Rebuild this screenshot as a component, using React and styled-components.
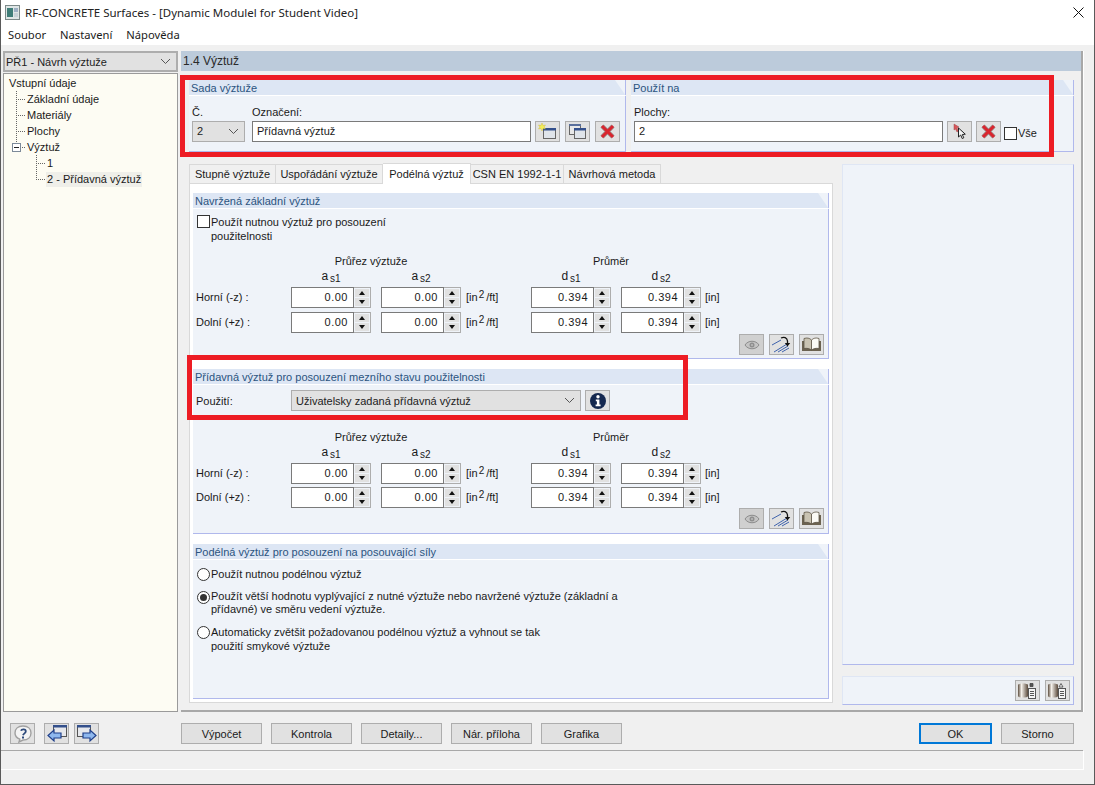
import React from "react"
import styled, { createGlobalStyle } from "styled-components"

const Global = createGlobalStyle`
  html, body { margin: 0; padding: 0; background: #fff; }
  body { font-family: "Liberation Sans", "Noto Sans", sans-serif; font-size: 11px; color: #1a1a1a; }
  * { box-sizing: border-box; }
`

const Window = styled.div`
  position: relative;
  width: 1095px;
  height: 785px;
  display: flex;
  flex-direction: column;
  background: #f0f0f0;
  border: 1px solid #5a5a5a;
  border-top: 0;
  overflow: hidden;
`

const TitleBar = styled.div`
  height: 22px;
  flex: none;
  padding: 2px 0 0 4px;
  background: #fff;
  display: flex;
  align-items: center;
  gap: 5px;
  font-family: "Noto Sans", sans-serif;
  font-size: 11.5px;
  color: #222;
`

const CloseX = styled.svg`
  margin-left: auto;
  margin-right: 10px;
  width: 11px;
  height: 11px;
`

const MenuBar = styled.div`
  height: 23px;
  flex: none;
  background: #fff;
  padding: 2px 0 0 7px;
  display: flex;
  align-items: center;
  gap: 14px;
  font-family: "Noto Sans", sans-serif;
  font-size: 11.2px;
`

const Body = styled.div`
  height: 667px;
  flex: none;
  display: flex;
  padding: 6px 0 0 2px;
  gap: 3px;
`

const Sidebar = styled.div`
  width: 175px;
  display: flex;
  flex-direction: column;
  gap: 1px;
`

const Combo = styled.div`
  width: ${p => p.$w}px;
  height: 21px;
  flex: none;
  display: flex;
  align-items: center;
  justify-content: space-between;
  padding: 0 5px 0 ${p => p.$thick ? 1 : 4}px;
  background: #e1e1e1;
  border: ${p => p.$thick ? 2 : 1}px solid #adadad;
  color: #222;
`

const Tree = styled.div`
  flex: 1;
  background: #fdfcf3;
  border: 1px solid #9a9a9a;
  padding: 1px 0 0 4px;
`

const TreeRow = styled.div`
  height: 16px;
  display: flex;
  align-items: center;
  margin-left: ${p => p.$level === 2 ? 28 : p.$level === 1 ? 8 : 0}px;
`

const Branch = styled.span`
  position: relative;
  width: 10px;
  height: 16px;
  flex: none;
  background-image:
    repeating-linear-gradient(to bottom, #666 0 1px, transparent 1px 2px),
    repeating-linear-gradient(to right, #666 0 1px, transparent 1px 2px);
  background-size: 1px ${p => p.$last ? "8px" : "16px"}, 9px 1px;
  background-position: 0 0, 0 8px;
  background-repeat: no-repeat;
`

const Expander = styled.span`
  position: absolute;
  left: -4px;
  top: 4px;
  width: 9px;
  height: 9px;
  background: #fff;
  border: 1px solid #7d8a99;
  &::after {
    content: "";
    position: absolute;
    left: 1px;
    top: 3px;
    width: 5px;
    height: 1px;
    background: #222;
  }
`

const TreeLabel = styled.span`
  padding: 0 1px;
  line-height: 15px;
  background: ${p => p.$selected ? "#efefe9" : "transparent"};
`

const Main = styled.div`
  width: 902px;
  border-right: 2px solid #a8a8a8;
  border-bottom: 2px solid #a8a8a8;
  box-shadow: 1px 0 0 #fff;
  display: flex;
  flex-direction: column;
`

const MainHeader = styled.div`
  height: 20px;
  flex: none;
  background: #bccbdb;
  padding-left: 2px;
  display: flex;
  align-items: center;
  font-size: 12px;
  color: #2a2a2a;
`

const TopRow = styled.div`
  display: flex;
  gap: 5px;
  padding: 9px 0 0 8px;
`

const Group = styled.section`
  width: ${p => p.$w ? p.$w + "px" : "auto"};
  height: ${p => p.$h}px;
  flex: none;
  display: flex;
  flex-direction: column;
  border-right: 1px solid #b0b8ec;
  border-bottom: 1px solid #b0b8ec;
  background: #eff3f9;
`

const GroupHead = styled.header`
  height: 16px;
  flex: none;
  margin-right: -1px;
  background: #dde6f4;
  padding-left: 2px;
  display: flex;
  align-items: center;
  color: #2b5480;
  border-bottom: 1px solid #fff;
  clip-path: polygon(0 0, calc(100% - 11px) 0, 100% 100%, 0 100%);
`

const GroupBody = styled.div`
  flex: 1;
  display: flex;
  flex-direction: column;
  padding: ${p => p.$top ?? 6}px 4px 0 3px;
`

const FieldRow = styled.div`
  display: flex;
  align-items: flex-end;
  gap: ${p => p.$gap || 6}px;
`

const Field = styled.label`
  display: flex;
  flex-direction: column;
  gap: 2px;
  line-height: 13px;
  margin-right: ${p => p.$after || 0}px;
`

const TextBox = styled.div`
  width: ${p => p.$w}px;
  height: 21px;
  display: flex;
  align-items: center;
  padding-left: 4px;
  background: #fff;
  border: 1px solid #7a7a7a;
`

const IconButton = styled.button`
  width: 25px;
  height: 21px;
  flex: none;
  padding: 0;
  display: flex;
  align-items: center;
  justify-content: center;
  background: ${p => p.$dim ? "#d0d0d0" : "#e1e1e1"};
  border: 1px solid #adadad;
`

const CheckBox = styled.span`
  width: 13px;
  height: 13px;
  flex: none;
  margin-left: ${p => p.$inset || 0}px;
  background: #fff;
  border: 1px solid #333;
`

const CheckLabel = styled.div`
  display: flex;
  align-items: ${p => p.$top ? "flex-start" : "center"};
  gap: 1px;
  line-height: 14px;
  margin-bottom: ${p => p.$lift || 0}px;
`

const Tabs = styled.div`
  display: flex;
  padding: 0 0 0 8px;
  margin-top: 12px;
  height: 20px;
`

const Tab = styled.div`
  width: ${p => p.$w}px;
  height: ${p => p.$active ? 21 : 19}px;
  margin-top: ${p => p.$active ? -1 : 0}px;
  display: flex;
  align-items: center;
  justify-content: center;
  white-space: nowrap;
  background: ${p => p.$active ? "#fff" : "#f0f0f0"};
  border: 1px solid #d9d9d9;
  border-bottom: 0;
  border-left-width: ${p => p.$first ? 1 : 0}px;
  position: ${p => p.$active ? "relative" : "static"};
  z-index: 1;
`

const Lower = styled.div`
  flex: 1;
  display: flex;
  padding-left: 8px;
`

const TabColumn = styled.div`
  width: 644px;
  flex: none;
  display: flex;
  flex-direction: column;
  margin-top: -1px;
`

const TabPanel = styled.div`
  height: 520px;
  background: #fff;
  border: 1px solid #d9d9d9;
  padding: 9px 3px 0 3px;
  display: flex;
  flex-direction: column;
  gap: 10px;
`

const RightColumn = styled.div`
  width: 232px;
  margin: -20px 0 0 9px;
  display: flex;
  flex-direction: column;
  gap: 11px;
`

const SidePanel = styled.div`
  height: ${p => p.$h}px;
  background: #eff3f9;
  border: 1px solid #dfe6f4;
  border-right: 1px solid #b0b8ec;
  border-bottom: 1px solid #b0b8ec;
  display: flex;
  align-items: center;
  justify-content: flex-end;
  gap: 5px;
  padding-right: 3px;
`

const ValueGrid = styled.div`
  --row-gap: ${p => p.$rowGap}px;
  display: grid;
  grid-template-columns: 95px 90px 80px 70px 90px 80px auto;
  align-items: start;
  margin-top: ${p => p.$top}px;
`

const GridHead = styled.div`
  grid-column: ${p => p.$col};
  text-align: center;
  height: 15px;
  line-height: 15px;
  padding-right: ${p => p.$off || 0}px;
`

const SymbolHead = styled(GridHead)`
  margin-bottom: 3px;
  font-size: 12px;
`

const Sub = styled.span`
  font-size: 10px;
  margin-left: 2px;
  position: relative;
  top: 2px;
`

const RowLabel = styled.div`
  grid-column: 1;
  height: 21px;
  line-height: 20px;
  margin-bottom: var(--row-gap);
`

const Spin = styled.div`
  width: 80px;
  height: 21px;
  margin-bottom: var(--row-gap);
  display: flex;
`

const SpinInput = styled.div`
  width: 63px;
  height: 21px;
  padding-right: 5px;
  background: #fff;
  border: 1px solid #7a7a7a;
  text-align: right;
  line-height: 18px;
  letter-spacing: 0.5px;
`

const SpinArrows = styled.div`
  width: 17px;
  height: 21px;
  padding: 1px;
  border: 1px solid #adadad;
  border-left: 0;
  display: flex;
  flex-direction: column;
  gap: 1px;
`

const SpinPart = styled.span`
  flex: 1;
  background: #e1e1e1;
  display: flex;
  align-items: center;
  justify-content: center;
  &::after {
    content: "";
    border-left: 3px solid transparent;
    border-right: 3px solid transparent;
    ${p => p.$up ? "border-bottom: 4px solid #111;" : "border-top: 4px solid #111;"}
  }
`

const Unit = styled.div`
  height: 21px;
  margin-bottom: var(--row-gap);
  padding-left: ${p => p.$left}px;
  line-height: 21px;
  white-space: nowrap;
`

const Sup = styled.span`
  font-size: 10px;
  position: relative;
  top: -3px;
  margin: 0 2px 0 1px;
`

const ToolRow = styled.div`
  display: flex;
  justify-content: flex-end;
  gap: 5px;
  margin-top: ${p => p.$top || 0}px;
`

const RadioList = styled.div`
  display: flex;
  flex-direction: column;
  gap: 9px;
`

const RadioRow = styled.div`
  display: flex;
  gap: 1px;
  line-height: ${p => p.$lh || 14}px;
`

const Radio = styled.span`
  width: 13px;
  height: 13px;
  flex: none;
  margin: 1px 0 0 1px;
  border-radius: 50%;
  background: #fff;
  border: 1px solid #333;
  display: flex;
  align-items: center;
  justify-content: center;
  &::after {
    content: "";
    display: ${p => p.$on ? "block" : "none"};
    width: 7px;
    height: 7px;
    border-radius: 50%;
    background: #333;
  }
`

const UseRow = styled.div`
  display: flex;
  align-items: center;
  gap: 4px;
`

const UseLabel = styled.div`
  width: 91px;
`

const Footer = styled.div`
  height: 39px;
  flex: none;
  display: flex;
  align-items: flex-start;
  padding: 11px 0 0 9px;
  border-bottom: 1px solid #a8a8a8;
  width: 1082px;
`

const FooterGroup = styled.div`
  display: flex;
  gap: ${p => p.$gap}px;
  margin-left: ${p => p.$left || 0}px;
`

const CmdButton = styled.button`
  width: ${p => p.$w || 81}px;
  height: 21px;
  padding: 0;
  font: inherit;
  color: #1a1a1a;
  background: #e1e1e1;
  border: ${p => p.$primary ? "2px solid #0078d7" : "1px solid #adadad"};
`

const StatusBar = styled.div`
  height: 19px;
  width: 1082px;
  flex: none;
  border-bottom: 1px solid #fff;
  box-shadow: 1px 0 0 #fff;
`

const RedBox = styled.div`
  position: absolute;
  left: ${p => p.$x}px;
  top: ${p => p.$y}px;
  width: ${p => p.$w}px;
  height: ${p => p.$h}px;
  border: 5px solid #ed1c24;
  pointer-events: none;
`

const Chevron = () => (
  <svg width="11" height="7" viewBox="0 0 11 7">
    <path d="M1 1l4.500 4.500L10 1" fill="none" stroke="#555" strokeWidth="1" />
  </svg>
)

const RedCross = () => (
  <svg width="17" height="17" viewBox="0 0 17 17">
    <path d="M3 3l11 11M14 3L3 14" stroke="#9c8a8a" strokeWidth="4.500" fill="none" />
    <path d="M3 3l11 11M14 3L3 14" stroke="#d9252e" strokeWidth="3" fill="none" />
  </svg>
)

const NewIcon = () => (
  <svg width="19" height="17" viewBox="0 0 19 17">
    <rect x="5.500" y="6.500" width="12" height="9" fill="#dfe4ea" stroke="#666" />
    <rect x="5" y="5" width="13" height="2.500" fill="#34508c" />
    <path d="M4 0l1 2.500 2.500-.5L6 4l1.500 2L5 5.500 4 8 3 5.500.5 6 2 4 .5 2 3 2.500z" fill="#f5ee5a" stroke="#c9b62c" strokeWidth=".4" />
  </svg>
)

const CopyIcon = () => (
  <svg width="19" height="17" viewBox="0 0 19 17">
    <rect x="1.500" y="1.500" width="11" height="10" fill="#e8e8e8" stroke="#666" />
    <rect x="1" y="1" width="12" height="2" fill="#5a6f9c" />
    <rect x="6.500" y="6.500" width="11" height="9" fill="#dfe4ea" stroke="#666" />
    <rect x="6" y="5" width="12" height="2.500" fill="#34508c" />
  </svg>
)

const PickIcon = () => (
  <svg width="18" height="18" viewBox="0 0 18 18">
    <path d="M3 1l5 3-2 1 1.500 3-1.500 1-1.500-3-1.500 1z" fill="#d8555a" stroke="#a04a4a" strokeWidth=".5" />
    <path d="M7.500 5l0 9 2.200-2 1.500 3.500 1.600-.7-1.500-3.300 3-.3z" fill="#f4f4f4" stroke="#222" strokeWidth="1" />
  </svg>
)

const EyeIcon = () => (
  <svg width="18" height="12" viewBox="0 0 18 12">
    <path d="M2 6c3-5 11-5 14 0-3 5-11 5-14 0z" fill="#c4c4c4" stroke="#8c8c8c" />
    <circle cx="9" cy="6" r="2.500" fill="#8f8f8f" />
    <circle cx="9" cy="6" r="1" fill="#bdbdbd" />
  </svg>
)

const HatchIcon = () => (
  <svg width="21" height="18" viewBox="0 0 21 18">
    <path d="M1 9l9-5M3 16L16 8M7 16l10-6M11 16l7-4" stroke="#3f63ad" strokeWidth="1" fill="none" />
    <path d="M10 2c3-1.500 6-.5 6.500 3v3" stroke="#111" strokeWidth="1.300" fill="none" />
    <path d="M13.800 7h5.400l-2.700 3.500z" fill="#111" />
  </svg>
)

const BookIcon = () => (
  <svg width="21" height="15" viewBox="0 0 21 15">
    <path d="M1 4h19v10H1z" fill="#6b6250" />
    <path d="M3 1.500c3-1 5.500-.5 7.500 1.500v10c-2-1.500-4.500-2-7.500-1.500z" fill="#c9c3b2" stroke="#5e5648" strokeWidth=".8" />
    <path d="M18 1.500c-3-1-5.500-.5-7.500 1.500v10c2-1.500 4.500-2 7.500-1.500z" fill="#fbfaf5" stroke="#5e5648" strokeWidth=".8" />
  </svg>
)

const InfoIcon = () => (
  <svg width="18" height="18" viewBox="0 0 18 18">
    <circle cx="9" cy="9" r="8" fill="#14284f" />
    <circle cx="9" cy="4.800" r="1.700" fill="#fff" />
    <path d="M6.800 7.500h3.600v5h1.200v1.700H6.600v-1.700h1.300V9.200H6.800z" fill="#fff" />
  </svg>
)

const HelpIcon = () => (
  <svg width="20" height="18" viewBox="0 0 20 18">
    <path d="M10 1c5 0 8 3 8 7s-3 7-8 7l-4 2 .8-2.800C3.500 13 2 11 2 8c0-4 3-7 8-7z" fill="#f4f4f4" stroke="#a0a0a0" strokeWidth="1.400" />
    <path d="M8 5.800c.6-2 4.800-2 4.800.5 0 2-2.300 2-2.800 4" fill="none" stroke="#2d4a7c" strokeWidth="1.800" />
    <rect x="9" y="11.500" width="2" height="2" fill="#2d4a7c" />
  </svg>
)

const NavIcon = ({ flip }) => (
  <svg width="22" height="19" viewBox="0 0 22 19">
    <rect x={flip ? 1.500 : 7.500} y="1.500" width="13" height="11" fill="#e6e8ec" stroke="#555" />
    <rect x={flip ? 1 : 7} y="1" width="14" height="2.500" fill="#34508c" />
    {flip
      ? <path d="M7 9h7V6l6 5.500-6 5.500v-3H7z" fill="#8fb8ee" stroke="#1f3f8a" strokeWidth="1.200" />
      : <path d="M15 9H8V6l-6 5.500L8 17v-3h7z" fill="#8fb8ee" stroke="#1f3f8a" strokeWidth="1.200" />}
  </svg>
)

const TableIcon = ({ id, star }) => (
  <svg width="21" height="18" viewBox="0 0 21 18">
    <defs>
      <linearGradient id={id} x1="0" x2="1" y1="0" y2="0">
        <stop offset="0" stopColor="#5d4e40" />
        <stop offset=".35" stopColor="#f4f0ea" />
        <stop offset="1" stopColor="#5a4a3c" />
      </linearGradient>
    </defs>
    <path d="M1 3c0-2 10-2 10 0v11c0 2-10 2-10 0z" fill={`url(#${id})`} />
    <rect x="11.500" y="6.500" width="7" height="10" fill="#f4f4f4" stroke="#555" />
    <path d="M13 9.500h4M13 11.500h4M13 13.500h4" stroke="#555" />
    <path d={star ? "M12 5l2-3.500L16 5z" : "M13 1.500h3v3h-3z"} fill={star ? "#f4f4f4" : "#555"} stroke="#444" strokeWidth=".8" />
  </svg>
)

const AppIcon = () => (
  <svg width="15" height="15" viewBox="0 0 15 15">
    <rect x=".500" y=".500" width="14" height="14" fill="#dfe6e6" stroke="#7d8a8a" />
    <rect x="2" y="3" width="6" height="9" fill="#3f7d78" />
    <rect x="9" y="3" width="4" height="4" fill="#9fb0c4" />
    <rect x="9" y="8" width="4" height="4" fill="#c8d2d8" />
  </svg>
)

const Spinner = ({ value }) => (
  <Spin>
    <SpinInput>{value}</SpinInput>
    <SpinArrows>
      <SpinPart $up />
      <SpinPart />
    </SpinArrows>
  </Spin>
)

const Values = ({ top, rowGap }) => (
  <ValueGrid $top={top} $rowGap={rowGap}>
    <GridHead $col="2 / 4" $off={10}>Průřez výztuže</GridHead>
    <GridHead $col="5 / 7" $off={10}>Průměr</GridHead>
    <SymbolHead $col="2" $off={10}>a<Sub>s1</Sub></SymbolHead>
    <SymbolHead $col="3">a<Sub>s2</Sub></SymbolHead>
    <SymbolHead $col="5" $off={10}>d<Sub>s1</Sub></SymbolHead>
    <SymbolHead $col="6">d<Sub>s2</Sub></SymbolHead>
    {["Horní (-z) :", "Dolní (+z) :"].map(label => (
      <React.Fragment key={label}>
        <RowLabel>{label}</RowLabel>
        <Spinner value="0.00" />
        <Spinner value="0.00" />
        <Unit $left={5}>[in<Sup>2</Sup>/ft]</Unit>
        <Spinner value="0.394" />
        <Spinner value="0.394" />
        <Unit $left={4}>[in]</Unit>
      </React.Fragment>
    ))}
  </ValueGrid>
)

const Tools = ({ top }) => (
  <ToolRow $top={top}>
    <IconButton $dim><EyeIcon /></IconButton>
    <IconButton><HatchIcon /></IconButton>
    <IconButton><BookIcon /></IconButton>
  </ToolRow>
)

const App = () => (
  <Window>
    <Global />
    <TitleBar>
      <AppIcon />
      <span>RF-CONCRETE Surfaces - [Dynamic Modulel for Student Video]</span>
      <CloseX viewBox="0 0 11 11">
        <path d="M.5.5l10 10M10.500.5l-10 10" stroke="#111" strokeWidth="1" />
      </CloseX>
    </TitleBar>
    <MenuBar>
      <span>Soubor</span>
      <span>Nastavení</span>
      <span>Nápověda</span>
    </MenuBar>
    <Body>
      <Sidebar>
        <Combo $w={175} $thick>
          <span>PŘ1 - Návrh výztuže</span>
          <Chevron />
        </Combo>
        <Tree>
          <TreeRow><TreeLabel>Vstupní údaje</TreeLabel></TreeRow>
          <TreeRow $level={1}><Branch /><TreeLabel>Základní údaje</TreeLabel></TreeRow>
          <TreeRow $level={1}><Branch /><TreeLabel>Materiály</TreeLabel></TreeRow>
          <TreeRow $level={1}><Branch /><TreeLabel>Plochy</TreeLabel></TreeRow>
          <TreeRow $level={1}><Branch $last><Expander /></Branch><TreeLabel>Výztuž</TreeLabel></TreeRow>
          <TreeRow $level={2}><Branch /><TreeLabel>1</TreeLabel></TreeRow>
          <TreeRow $level={2}><Branch $last /><TreeLabel $selected>2 - Přídavná výztuž</TreeLabel></TreeRow>
        </Tree>
      </Sidebar>
      <Main>
        <MainHeader>1.4 Výztuž</MainHeader>
        <TopRow>
          <Group $w={437} $h={72}>
            <GroupHead>Sada výztuže</GroupHead>
            <GroupBody $top={10}>
              <FieldRow $gap={4}>
                <Field $after={3}>
                  <span>Č.</span>
                  <Combo $w={53}><span>2</span><Chevron /></Combo>
                </Field>
                <Field>
                  <span>Označení:</span>
                  <TextBox $w={279}>Přídavná výztuž</TextBox>
                </Field>
                <FieldRow $gap={5}>
                  <IconButton><NewIcon /></IconButton>
                  <IconButton><CopyIcon /></IconButton>
                  <IconButton><RedCross /></IconButton>
                </FieldRow>
              </FieldRow>
            </GroupBody>
          </Group>
          <Group $w={443} $h={72}>
            <GroupHead>Použít na</GroupHead>
            <GroupBody $top={10}>
              <FieldRow $gap={4}>
                <Field>
                  <span>Plochy:</span>
                  <TextBox $w={309}>2</TextBox>
                </Field>
                <IconButton><PickIcon /></IconButton>
                <IconButton><RedCross /></IconButton>
                <CheckLabel $lift={2}>
                  <CheckBox $inset={-1} />
                  <span>Vše</span>
                </CheckLabel>
              </FieldRow>
            </GroupBody>
          </Group>
        </TopRow>
        <Tabs>
          <Tab $first $w={87}>Stupně výztuže</Tab>
          <Tab $w={107}>Uspořádání výztuže</Tab>
          <Tab $active $w={88}>Podélná výztuž</Tab>
          <Tab $w={93}>CSN EN 1992-1-1</Tab>
          <Tab $w={97}>Návrhová metoda</Tab>
        </Tabs>
        <Lower>
          <TabColumn>
            <TabPanel>
              <Group $h={166}>
                <GroupHead>Navržená základní výztuž</GroupHead>
                <GroupBody $top={6}>
                  <CheckLabel $top>
                    <CheckBox $inset={1} />
                    <span>Použít nutnou výztuž pro posouzení<br />použitelnosti</span>
                  </CheckLabel>
                  <Values top={11} rowGap={4} />
                  <Tools top={-3} />
                </GroupBody>
              </Group>
              <Group $h={165}>
                <GroupHead>Přídavná výztuž pro posouzení mezního stavu použitelnosti</GroupHead>
                <GroupBody $top={5}>
                  <UseRow>
                    <UseLabel>Použití:</UseLabel>
                    <Combo $w={290}><span>Uživatelsky zadaná přídavná výztuž</span><Chevron /></Combo>
                    <IconButton><InfoIcon /></IconButton>
                  </UseRow>
                  <Values top={19} rowGap={3} />
                  <Tools top={-3} />
                </GroupBody>
              </Group>
              <Group $h={155}>
                <GroupHead>Podélná výztuž pro posouzení na posouvající síly</GroupHead>
                <GroupBody $top={7}>
                  <RadioList>
                    <RadioRow><Radio /><span>Použít nutnou podélnou výztuž</span></RadioRow>
                    <RadioRow $lh={13}><Radio $on /><span>Použít větší hodnotu vyplývající z nutné výztuže nebo navržené výztuže (základní a<br />přídavné) ve směru vedení výztuže.</span></RadioRow>
                    <RadioRow><Radio /><span>Automaticky zvětšit požadovanou podélnou výztuž a vyhnout se tak<br />použití smykové výztuže</span></RadioRow>
                  </RadioList>
                </GroupBody>
              </Group>
            </TabPanel>
          </TabColumn>
          <RightColumn>
            <SidePanel $h={501} />
            <SidePanel $h={29}>
              <IconButton><TableIcon id="cyl-a" /></IconButton>
              <IconButton><TableIcon id="cyl-b" star /></IconButton>
            </SidePanel>
          </RightColumn>
        </Lower>
      </Main>
    </Body>
    <Footer>
      <FooterGroup $gap={9}>
        <IconButton><HelpIcon /></IconButton>
      </FooterGroup>
      <FooterGroup $gap={5} $left={9}>
        <IconButton><NavIcon /></IconButton>
        <IconButton><NavIcon flip /></IconButton>
      </FooterGroup>
      <FooterGroup $gap={9} $left={82}>
        <CmdButton>Výpočet</CmdButton>
        <CmdButton>Kontrola</CmdButton>
        <CmdButton>Detaily...</CmdButton>
        <CmdButton>Nár. příloha</CmdButton>
        <CmdButton>Grafika</CmdButton>
      </FooterGroup>
      <FooterGroup $gap={9} $left={297}>
        <CmdButton $w={73} $primary>OK</CmdButton>
        <CmdButton $w={73}>Storno</CmdButton>
      </FooterGroup>
    </Footer>
    <StatusBar />
    <RedBox $x={179} $y={75} $w={874} $h={82} />
    <RedBox $x={186} $y={355} $w={501} $h={65} />
  </Window>
)

export default App
